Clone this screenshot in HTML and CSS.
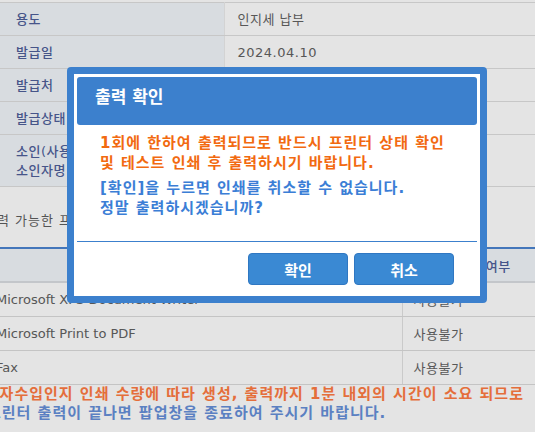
FILE: index.html
```html
<!DOCTYPE html>
<html lang="ko">
<head>
<meta charset="utf-8">
<title>출력 확인</title>
<link rel="stylesheet" href="styles.css">
</head>
<body>
<div class="page">
  <table class="info">
    <colgroup><col class="c-label"><col></colgroup>
    <tbody>
      <tr><th>용도</th><td>인지세 납부</td></tr>
      <tr><th>발급일</th><td class="num">2024.04.10</td></tr>
      <tr><th>발급처</th><td>서울특별시</td></tr>
      <tr><th>발급상태</th><td>정상</td></tr>
      <tr class="tall"><th>소인(사용)일시<br>소인자명</th><td>-</td></tr>
    </tbody>
  </table>

  <section class="printers">
    <h3 class="sec-title">출력 가능한 프린터 목록</h3>
    <table class="plist">
      <colgroup><col class="c-name"><col></colgroup>
      <thead>
        <tr><th>프린터명</th><th class="status-h">사용가능 여부</th></tr>
      </thead>
      <tbody>
        <tr><td class="name">Microsoft XPS Document Writer</td><td class="status">사용불가</td></tr>
        <tr><td class="name">Microsoft Print to PDF</td><td class="status">사용불가</td></tr>
        <tr><td class="name">Fax</td><td class="status">사용불가</td></tr>
      </tbody>
    </table>
    <p class="note orange">※ 전자수입인지 인쇄 수량에 따라 생성, 출력까지 1분 내외의 시간이 소요 되므로</p>
    <p class="note blue cont">프린터 출력이 끝나면 팝업창을 종료하여 주시기 바랍니다.</p>
  </section>
</div>

<div class="backdrop"></div>

<div class="dialog" role="dialog" aria-labelledby="dlg-title">
  <div class="dialog-title" id="dlg-title">출력 확인</div>
  <div class="dialog-body">
    <p class="msg orange">1회에 한하여 출력되므로 반드시 프린터 상태 확인<br>및 테스트 인쇄 후 출력하시기 바랍니다.</p>
    <p class="msg blue">[확인]을 누르면 인쇄를 취소할 수 없습니다.<br>정말 출력하시겠습니까?</p>
  </div>
  <div class="dialog-sep"></div>
  <div class="dialog-actions">
    <button class="btn" type="button">확인</button>
    <button class="btn" type="button">취소</button>
  </div>
</div>
</body>
</html>
```

FILE: styles.css
```css
html, body {
  margin: 0;
  padding: 0;
  overflow: hidden;
  background: #fff;
}

body {
  font-family: "DejaVu Sans", "Noto Sans CJK KR", sans-serif;
  font-size: 13px;
  color: #626262;
  width: 535px;
  height: 432px;
}

.page {
  padding-top: 2px;
}

/* ---------- info table ---------- */
.info {
  width: 100%;
  border-collapse: collapse;
  table-layout: fixed;
  border-top: 1px solid #dfdfdf;
  letter-spacing: 0.5px;
}

.info .c-label { width: 224px; }

.info th,
.info td {
  height: 32px;
  padding: 0;
  border-bottom: 1px solid #dfdfdf;
  vertical-align: middle;
  line-height: 19px;
}

.info th {
  background: #f2f7fb;
  color: #4f609a;
  font-weight: 500;
  text-align: left;
  padding-left: 16px;
  border-right: 1px solid #ececec;
}

.info td {
  padding-left: 13px;
  color: #626262;
}

.info .tall th,
.info .tall td { height: 51px; }

/* ---------- printers ---------- */
.printers {
  margin-left: -16px;
  width: 556px;
}

.sec-title {
  margin: 24px 0 16px;
  padding-left: 0;
  font-size: 13px;
  font-weight: 400;
  line-height: 20px;
  color: #5f5f5f;
  letter-spacing: 1px;
}

.plist {
  width: 100%;
  border-collapse: collapse;
  table-layout: fixed;
  border-top: 2px solid #4d84d1;
  border-bottom: 1px solid #b8b8b8;
}

.plist .c-name { width: 418px; }

.plist th {
  height: 32px;
  padding: 0;
  background: #f2f7fb;
  color: #4f609a;
  font-weight: 500;
  text-align: center;
  letter-spacing: 0.5px;
  border-bottom: 2px solid #dbdee2;
}

.plist td {
  height: 33px;
  padding: 0 0 0 12px;
  border-bottom: 1px solid #dcdcdc;
  color: #626262;
}

.plist td.status {
  border-left: 1px solid #e2e2e2;
  padding-left: 11px;
  letter-spacing: 0.5px;
}

.note {
  margin: 0 0 0 -21px;
  font-size: 15px;
  font-weight: 700;
  line-height: 19px;
  letter-spacing: 1px;
  white-space: nowrap;
}

.note.cont { padding-left: 24px; }

.note.orange { color: #ff7b43; }
.note.blue { color: #6690d9; }

/* ---------- modal ---------- */
.backdrop {
  position: fixed;
  inset: 0;
  background: rgba(0, 0, 0, 0.105);
}

.dialog {
  position: absolute;
  left: 67px;
  top: 67px;
  width: 420px;
  height: 236px;
  box-sizing: border-box;
  border: 7px solid #3c80cd;
  border-radius: 4px;
  background: #fff;
  padding: 3px;
  display: flex;
  flex-direction: column;
}

.dialog-title {
  height: 48px;
  box-sizing: border-box;
  padding: 10px 0 0 18px;
  background: #3c80cd;
  border-radius: 3px;
  color: #fff;
  font-size: 17px;
  font-weight: 700;
  line-height: 20px;
}

.dialog-body {
  padding: 8px 0 0 23px;
}

.msg {
  margin: 0;
  font-size: 15px;
  font-weight: 700;
  line-height: 20px;
  letter-spacing: 1px;
  white-space: nowrap;
}

.msg + .msg { margin-top: 5px; }

.msg.orange { color: #f26a10; }
.msg.blue { color: #3b7ed6; }

.dialog-sep {
  margin-top: 23px;
  border-top: 1px solid #3c80cd;
}

.dialog-actions {
  margin-top: 11px;
  padding-right: 23px;
  display: flex;
  justify-content: flex-end;
  gap: 6px;
}

.btn {
  width: 100px;
  height: 32px;
  box-sizing: border-box;
  border: 1px solid #2f77c2;
  border-radius: 4px;
  background: #3a89d3;
  color: #fff;
  font-family: "DejaVu Sans", "Noto Sans CJK KR", sans-serif;
  font-size: 15px;
  font-weight: 700;
  padding: 0;
}
```
